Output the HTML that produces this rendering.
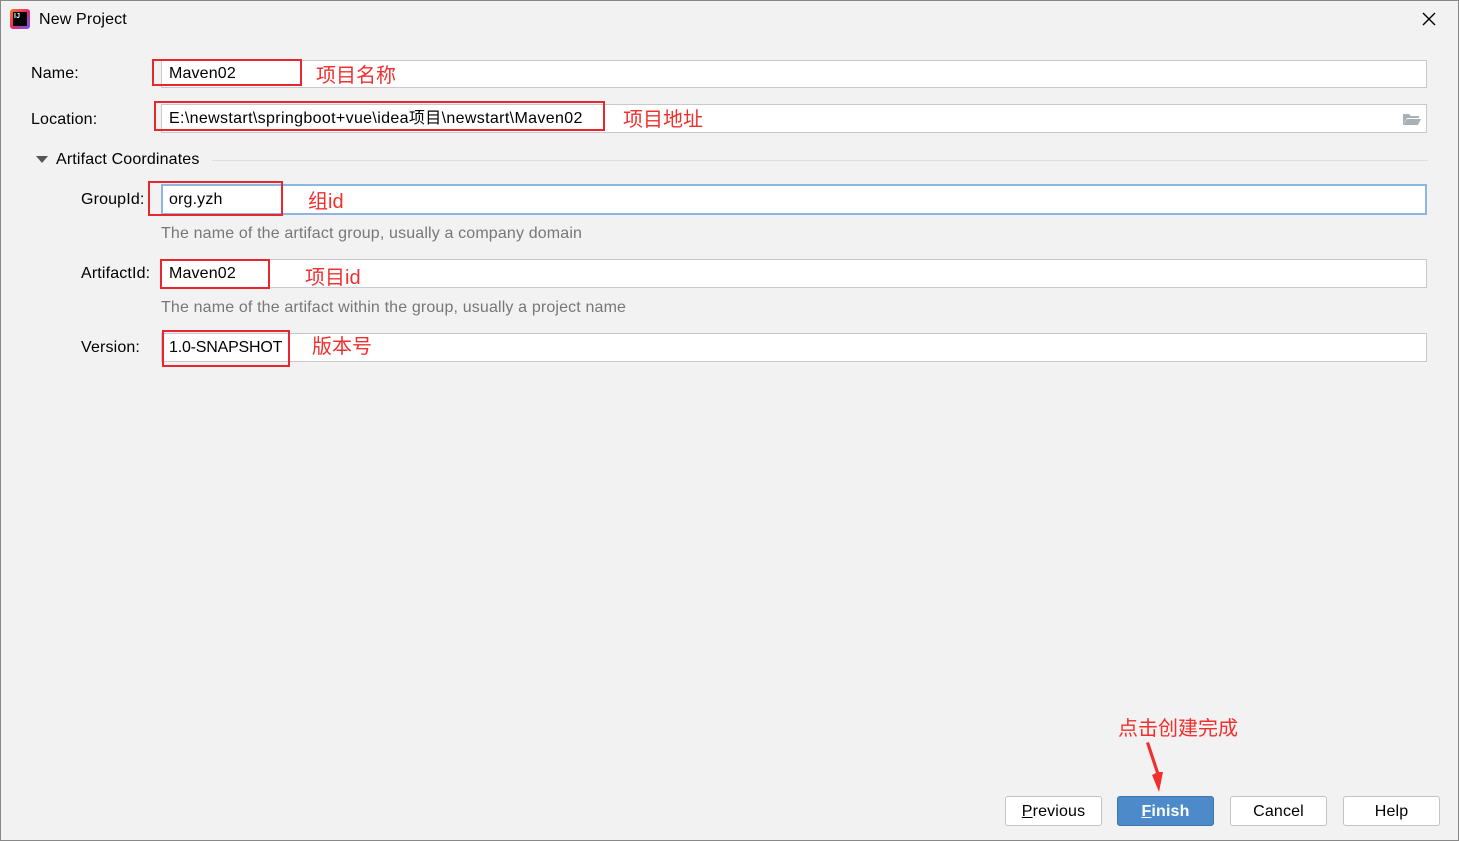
<!DOCTYPE html>
<html><head><meta charset="utf-8"><style>
body{margin:0;width:1459px;height:841px;background:#f2f2f2;font-family:"Liberation Sans","Noto Sans CJK SC",sans-serif;font-size:16px;letter-spacing:0.15px;color:#000;position:relative;overflow:hidden}
.a{position:absolute}
.f{position:absolute;left:161px;width:1266px;background:#fff;border:1px solid #c9c9c9;box-sizing:border-box}
.t{position:absolute;white-space:nowrap}
.r{position:absolute;border:2px solid #e8262d;box-sizing:border-box}
.cn{position:absolute;color:#f0302f;font-size:20px;letter-spacing:0;white-space:nowrap}
.h{position:absolute;color:#777;white-space:nowrap}
.b{position:absolute;top:796px;width:97px;height:30px;box-sizing:border-box;border:1px solid #c4c4c4;border-radius:3px;background:#fff;text-align:center;line-height:30px;font-size:16px}
</style></head><body>
<div class="a" style="left:0;top:0;width:1459px;height:841px;border:1px solid #888;box-sizing:border-box"></div>
<div class="a" style="left:10px;top:9px;width:20px;height:20px;background:linear-gradient(135deg,#fc801d,#e8256f 50%,#6b57ff);border-radius:3px"></div>
<div class="a" style="left:13px;top:12px;width:14px;height:14px;background:#000;color:#fff;font-size:7px;font-weight:bold;line-height:9px;padding-left:1px;box-sizing:border-box">IJ</div>
<div class="t" style="left:39px;top:11px">New Project</div>
<svg class="a" style="left:1422px;top:12px" width="14" height="14"><path d="M1 1L13 13M13 1L1 13" stroke="#000" stroke-width="1.4"/></svg>

<div class="t" style="left:31px;top:65px">Name:</div>
<div class="f" style="top:60px;height:28px"></div>
<div class="t" style="left:169px;top:65px">Maven02</div>
<div class="r" style="left:152px;top:59px;width:150px;height:27px"></div>
<div class="cn" style="left:316px;top:59px">项目名称</div>

<div class="t" style="left:31px;top:111px">Location:</div>
<div class="f" style="top:104px;height:29px"></div>
<div class="t" style="left:169px;top:110px;line-height:18px;letter-spacing:0.35px">E:\newstart\springboot+vue\idea项目\newstart\Maven02</div>
<div class="r" style="left:154px;top:101px;width:451px;height:30px"></div>
<div class="cn" style="left:623px;top:103px">项目地址</div>
<svg class="a" style="left:1402px;top:112px" width="19" height="14"><path d="M1 2h6l2 2h8v2H5L1 13Z" fill="#a9b0b6"/><path d="M5 7h14l-3 6H1Z" fill="#a9b0b6"/></svg>

<div class="a" style="left:36px;top:156px;width:0;height:0;border-left:6px solid transparent;border-right:6px solid transparent;border-top:7px solid #555"></div>
<div class="t" style="left:56px;top:151px">Artifact Coordinates</div>
<div class="a" style="left:212px;top:160px;width:1216px;height:1px;background:#ddd"></div>

<div class="t" style="left:81px;top:191px">GroupId:</div>
<div class="f" style="top:184px;height:31px;border:2px solid #8fb6e3"></div>
<div class="t" style="left:169px;top:191px">org.yzh</div>
<div class="r" style="left:148px;top:181px;width:135px;height:35px"></div>
<div class="cn" style="left:308px;top:185px">组id</div>
<div class="h" style="left:161px;top:225px">The name of the artifact group, usually a company domain</div>

<div class="t" style="left:81px;top:265px">ArtifactId:</div>
<div class="f" style="top:259px;height:29px"></div>
<div class="t" style="left:169px;top:265px">Maven02</div>
<div class="r" style="left:160px;top:259px;width:110px;height:30px"></div>
<div class="cn" style="left:305px;top:261px">项目id</div>
<div class="h" style="left:161px;top:299px">The name of the artifact within the group, usually a project name</div>

<div class="t" style="left:81px;top:339px">Version:</div>
<div class="f" style="top:333px;height:29px"></div>
<div class="t" style="left:169px;top:339px;letter-spacing:-0.2px">1.0-SNAPSHOT</div>
<div class="r" style="left:162px;top:330px;width:128px;height:37px"></div>
<div class="cn" style="left:312px;top:330px">版本号</div>

<div class="cn" style="left:1118px;top:712px">点击创建完成</div>
<svg class="a" style="left:1140px;top:740px" width="30" height="55"><path d="M6 3 L16 33 L12 35 L19 52 L23 32 L19 32 L9 2 Z" fill="#f0302f"/></svg>

<div class="b" style="left:1005px"><u>P</u>revious</div>
<div class="b" style="left:1117px;background:#4d8ac9;border-color:#3f74ad;color:#fff;font-weight:bold"><u>F</u>inish</div>
<div class="b" style="left:1230px">Cancel</div>
<div class="b" style="left:1343px">Help</div>
</body></html>
